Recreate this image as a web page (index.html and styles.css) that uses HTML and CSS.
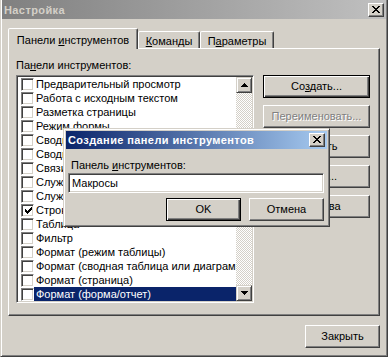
FILE: index.html
```html
<!DOCTYPE html>
<html lang="ru">
<head>
<meta charset="utf-8">
<title>Настройка</title>
<link rel="stylesheet" href="styles.css">
</head>
<body>
<div class="window">
  <div class="titlebar inactive">
    <span class="title">Настройка</span>
    <span class="capbtn"><svg width="8" height="7" viewBox="0 0 8 7" shape-rendering="crispEdges"><path d="M0 0h2v1h-2z M6 0h2v1h-2z M1 1h2v1h-2z M5 1h2v1h-2z M2 2h4v1h-4z M3 3h2v1h-2z M2 4h4v1h-4z M1 5h2v1h-2z M5 5h2v1h-2z M0 6h2v1h-2z M6 6h2v1h-2z" fill="#000"/></svg></span>
  </div>
  <div class="body">
    <div class="tabs">
      <div class="tab sel t1"><span>Панели <u>и</u>нструментов</span></div>
      <div class="tab t2"><span><u>К</u>оманды</span></div>
      <div class="tab t3"><span>П<u>а</u>раметры</span></div>
    </div>
    <div class="panel">
      <div class="leftcol">
        <div class="lbl">Па<u>н</u>ели инструментов:</div>
        <div class="listbox">
          <div class="items">
            <div class="row"><span class="cb"></span><span class="txt">Предварительный просмотр</span></div>
            <div class="row"><span class="cb"></span><span class="txt">Работа с исходным текстом</span></div>
            <div class="row"><span class="cb"></span><span class="txt">Разметка страницы</span></div>
            <div class="row"><span class="cb"></span><span class="txt">Режим формы</span></div>
            <div class="row"><span class="cb"></span><span class="txt">Сводная диаграмма</span></div>
            <div class="row"><span class="cb"></span><span class="txt">Сводная таблица</span></div>
            <div class="row"><span class="cb"></span><span class="txt">Связи</span></div>
            <div class="row"><span class="cb"></span><span class="txt">Служебная 1</span></div>
            <div class="row"><span class="cb"></span><span class="txt">Служебная 2</span></div>
            <div class="row"><span class="cb"><svg width="7" height="7" viewBox="0 0 7 7" shape-rendering="crispEdges"><path d="M6 0h1v1h-1z M5 1h2v1h-2z M0 2h1v1h-1z M4 2h3v1h-3z M0 3h2v1h-2z M3 3h3v1h-3z M0 4h5v1h-5z M1 5h3v1h-3z M2 6h1v1h-1z" fill="#000"/></svg></span><span class="txt">Строка меню</span></div>
            <div class="row"><span class="cb"></span><span class="txt">Таблица</span></div>
            <div class="row"><span class="cb"></span><span class="txt">Фильтр</span></div>
            <div class="row"><span class="cb"></span><span class="txt">Формат (режим таблицы)</span></div>
            <div class="row"><span class="cb"></span><span class="txt">Формат (сводная таблица или диаграмма)</span></div>
            <div class="row"><span class="cb"></span><span class="txt">Формат (страница)</span></div>
            <div class="row selrow"><span class="cb"></span><span class="txt">Формат (форма/отчет)</span></div>
          </div>
          <div class="scrollbar">
            <span class="sbtn"><svg width="7" height="4" viewBox="0 0 7 4" shape-rendering="crispEdges"><path d="M3 0h1v1h-1z M2 1h3v1h-3z M1 2h5v1h-5z M0 3h7v1h-7z" fill="#000"/></svg></span>
            <span class="track"></span>
            <span class="sbtn"><svg width="7" height="4" viewBox="0 0 7 4" shape-rendering="crispEdges"><path d="M0 0h7v1h-7z M1 1h5v1h-5z M2 2h3v1h-3z M3 3h1v1h-1z" fill="#000"/></svg></span>
          </div>
        </div>
      </div>
      <div class="rightcol">
        <div class="btn default wide"><span>Со<u>з</u>дать...</span></div>
        <div class="btn wide disabled"><span>Переименовать...</span></div>
        <div class="btn wide"><span>Удалить</span></div>
        <div class="btn wide"><span>Сброс...</span></div>
        <div class="btn wide"><span>Свойства</span></div>
      </div>
    </div>
    <div class="footer">
      <div class="btn std"><span>Закрыть</span></div>
    </div>
  </div>

  <div class="dlg">
    <div class="titlebar active">
      <span class="title">Создание панели инструментов</span>
      <span class="capbtn"><svg width="8" height="7" viewBox="0 0 8 7" shape-rendering="crispEdges"><path d="M0 0h2v1h-2z M6 0h2v1h-2z M1 1h2v1h-2z M5 1h2v1h-2z M2 2h4v1h-4z M3 3h2v1h-2z M2 4h4v1h-4z M1 5h2v1h-2z M5 5h2v1h-2z M0 6h2v1h-2z M6 6h2v1h-2z" fill="#000"/></svg></span>
    </div>
    <div class="dlg-body">
      <div class="dlg-lbl">Панель <u>и</u>нструментов:</div>
      <div class="edit">Макросы</div>
      <div class="dlg-btns">
        <div class="btn std default"><span>OK</span></div>
        <div class="btn std"><span>Отмена</span></div>
      </div>
    </div>
  </div>
</div>
</body>
</html>
```

FILE: styles.css
```css
* { box-sizing: border-box; }
html, body { margin: 0; padding: 0; }
body {
  width: 388px;
  height: 357px;
  overflow: hidden;
  background: #d4d0c8;
  font-family: "Liberation Sans", Arial, sans-serif;
  font-size: 11px;
  color: #000;
}
u { text-decoration: underline; text-underline-offset: 1px; }

.window {
  position: relative;
  width: 388px;
  height: 357px;
  background: #d4d0c8;
  border-style: solid;
  border-width: 0 1px 1px 1px;
  border-color: #404040 #404040 #404040 #d4d0c8;
  box-shadow: inset 1px 0 #fff, inset -1px -1px #808080;
  padding: 0 1px 1px 1px;
  display: flex;
  flex-direction: column;
}

.titlebar {
  height: 19px;
  display: flex;
  align-items: center;
  padding: 0 2px 0 2px;
  flex: none;
}
.titlebar.inactive { background: linear-gradient(to right, #808080, #c0c0c0); }
.titlebar.inactive .title { color: #d4d0c8; }
.titlebar.active { background: linear-gradient(to right, #0a246a, #a6caf0); height: 18px; }
.titlebar.active .title { color: #fff; }
.title { flex: 1; font-weight: bold; white-space: nowrap; letter-spacing: 0.4px; }

.capbtn {
  width: 16px;
  height: 14px;
  display: flex;
  align-items: center;
  justify-content: center;
  background: #d4d0c8;
  border: 1px solid;
  border-color: #fff #404040 #404040 #fff;
  box-shadow: inset -1px -1px #808080;
  padding: 0 1px 1px 0;
}

.body {
  flex: 1;
  display: flex;
  flex-direction: column;
  padding: 9px 6px 0 6px;
}

.tabs {
  display: flex;
  align-items: flex-end;
  height: 20px;
  position: relative;
  z-index: 1;
}
.tab {
  height: 17px;
  display: flex;
  align-items: center;
  justify-content: center;
  padding-top: 2px;
  border-style: solid;
  border-width: 1px 1px 0 1px;
  border-color: #fff #404040 transparent #fff;
  box-shadow: inset -1px 0 #808080;
  border-radius: 2px 2px 0 0;
  background: #d4d0c8;
  white-space: nowrap;
}
.tab.sel { height: 21px; margin-bottom: -1px; }
.t1 { width: 130px; }
.t2 { width: 62px; }
.t3 { width: 74px; }

.panel {
  height: 268px;
  display: flex;
  border: 1px solid;
  border-color: #fff #404040 #404040 #fff;
  box-shadow: inset -1px -1px #808080;
  padding: 9px 9px 0 7px;
}
.leftcol { width: 238px; display: flex; flex-direction: column; }
.lbl { height: 14px; line-height: 14px; white-space: nowrap; }

.listbox {
  margin-top: 3px;
  width: 238px;
  height: 228px;
  display: flex;
  background: #fff;
  border: 1px solid;
  border-color: #808080 #fff #fff #808080;
  box-shadow: inset 1px 1px #404040, inset -1px -1px #d4d0c8;
  padding: 1px;
}
.items { flex: 1; min-width: 0; overflow: hidden; }
.row { height: 14px; display: flex; align-items: center; white-space: nowrap; }
.cb {
  flex: none;
  width: 13px;
  height: 13px;
  margin-left: 3px;
  background: #fff;
  border: 1px solid;
  border-color: #808080 #fff #fff #808080;
  box-shadow: inset 1px 1px #404040, inset -1px -1px #d4d0c8;
  display: flex;
  align-items: center;
  justify-content: center;
  padding: 1px 0 0 1px;
}
.txt { flex: 1; height: 14px; line-height: 14px; padding-left: 2px; overflow: hidden; }
.selrow .txt { background: #0a246a; color: #fff; }

.scrollbar { width: 16px; flex: none; display: flex; flex-direction: column; }
.sbtn {
  width: 16px;
  height: 16px;
  flex: none;
  display: flex;
  align-items: center;
  justify-content: center;
  background: #d4d0c8;
  border: 1px solid;
  border-color: #d4d0c8 #404040 #404040 #d4d0c8;
  box-shadow: inset 1px 1px #fff, inset -1px -1px #808080;
}
.track {
  flex: 1;
  background: repeating-conic-gradient(#d4d0c8 0 25%, #fff 0 50%) 0 0 / 2px 2px;
}

.rightcol { margin-left: 9px; padding-top: 17px; display: flex; flex-direction: column; gap: 7px; }

.btn {
  height: 23px;
  display: flex;
  align-items: center;
  justify-content: center;
  background: #d4d0c8;
  border: 1px solid;
  border-color: #fff #404040 #404040 #fff;
  box-shadow: inset -1px -1px #808080;
  white-space: nowrap;
  padding-bottom: 1px;
}
.btn.default {
  border-color: #000;
  box-shadow: inset 1px 1px #fff, inset -1px -1px #404040, inset -2px -2px #808080;
}
.btn.disabled { color: #808080; text-shadow: 1px 1px #fff; }
.wide { width: 107px; }
.std { width: 75px; }

.footer { display: flex; justify-content: flex-end; padding-top: 9px; }

.dlg {
  position: absolute;
  left: 62px;
  top: 128px;
  width: 267px;
  height: 99px;
  z-index: 5;
  background: #d4d0c8;
  border: 1px solid;
  border-color: #d4d0c8 #404040 #404040 #d4d0c8;
  box-shadow: inset 1px 1px #fff, inset -1px -1px #808080;
  padding: 2px;
  display: flex;
  flex-direction: column;
}
.dlg-body { padding: 9px 3px 0 1px; display: flex; flex-direction: column; }
.dlg-lbl { height: 14px; line-height: 14px; margin-left: 4px; }
.edit {
  margin-top: 1px;
  height: 20px;
  line-height: 16px;
  padding: 1px 0 0 3px;
  background: #fff;
  border: 1px solid;
  border-color: #808080 #fff #fff #808080;
  box-shadow: inset 1px 1px #404040, inset -1px -1px #d4d0c8;
  margin-left: 1px;
}
.dlg-btns { display: flex; justify-content: flex-end; gap: 8px; margin-top: 5px; }
```
